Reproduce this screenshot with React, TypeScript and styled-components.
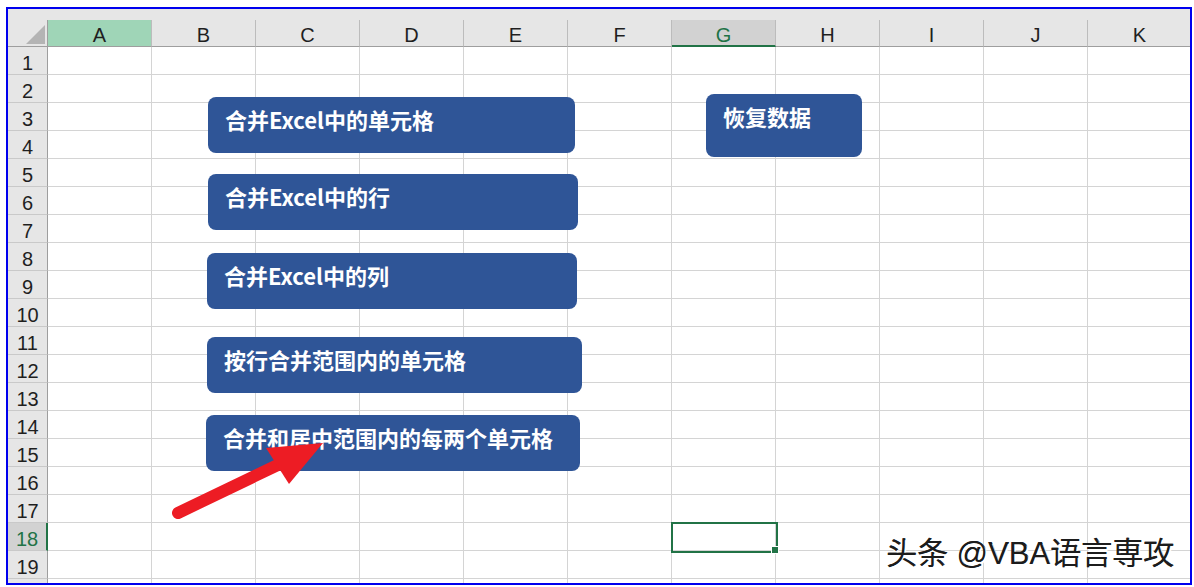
import React from "react";
import styled, { createGlobalStyle, css } from "styled-components";

const GlobalStyle = createGlobalStyle`
  html, body { margin: 0; padding: 0; background: #ffffff; }
  body {
    width: 1194px;
    height: 587px;
    overflow: hidden;
    font-family: "Liberation Sans", Arial, sans-serif;
  }
`;

const COLS = ["A", "B", "C", "D", "E", "F", "G", "H", "I", "J", "K"];
const ROWS = Array.from({ length: 19 }, (_, i) => i + 1);
const SEL_COL = "G";
const SEL_ROW = 18;
const HOVER_COL = "A";

const GREEN = "#217346";

const Page = styled.div`
  padding: 7px 0 0 6px;
`;

const Frame = styled.div`
  position: relative;
  box-sizing: border-box;
  width: 1186px;
  height: 578px;
  border: 2px solid #0000ee;
  background: #e6e6e6;
  overflow: hidden;
`;

const TopBand = styled.div`
  height: 11px;
  background: #e6e6e6;
`;

const Sheet = styled.div`
  display: grid;
  grid-template-columns: 40px repeat(11, 104px);
  grid-template-rows: 27px repeat(20, 28px);
  background: #ffffff;
`;

const Corner = styled.div`
  position: relative;
  box-sizing: border-box;
  background: #e6e6e6;
  border-right: 1px solid #9e9e9e;
  border-bottom: 1px solid #9e9e9e;
  &::after {
    content: "";
    position: absolute;
    right: 2px;
    bottom: 2px;
    width: 19px;
    height: 19px;
    background: #b4b4b4;
    clip-path: polygon(100% 0, 100% 100%, 0 100%);
  }
`;

const headerText = css`
  display: flex;
  align-items: center;
  justify-content: center;
  box-sizing: border-box;
  font-family: "Liberation Sans", Arial, sans-serif;
  font-size: 20px;
  padding-top: 5px;
  color: #1f1f1f;
`;

const ColHeader = styled.div<{ $state: "normal" | "hover" | "selected" }>`
  ${headerText}
  border-right: 1px solid #bcbcbc;
  border-bottom: 1px solid #9e9e9e;
  background: #e6e6e6;
  ${(p) =>
    p.$state === "hover" &&
    css`
      background: #9fd5b7;
    `}
  ${(p) =>
    p.$state === "selected" &&
    css`
      background: #d2d2d2;
      color: ${GREEN};
      border-bottom: 2px solid ${GREEN};
    `}
`;

const RowHeader = styled.div<{ $selected?: boolean }>`
  ${headerText}
  background: #e6e6e6;
  border-right: 1px solid #9e9e9e;
  border-bottom: 1px solid #c9c9c9;
  ${(p) =>
    p.$selected &&
    css`
      background: #d2d2d2;
      color: ${GREEN};
      border-right: 2px solid ${GREEN};
    `}
`;

const Cell = styled.div`
  position: relative;
  box-sizing: border-box;
  background: #ffffff;
  border-right: 1px solid #d4d4d4;
  border-bottom: 1px solid #d4d4d4;
`;

const Selection = styled.div`
  position: absolute;
  left: -1px;
  top: -1px;
  width: 107px;
  height: 31px;
  box-sizing: border-box;
  border: 2px solid ${GREEN};
  z-index: 2;
`;

const FillHandle = styled.div`
  position: absolute;
  left: 98px;
  top: 22px;
  width: 6px;
  height: 6px;
  background: ${GREEN};
  border: 1px solid #ffffff;
`;

const Shape = styled.div<{ $x: number; $y: number; $w: number; $h: number }>`
  position: absolute;
  left: ${(p) => p.$x}px;
  top: ${(p) => p.$y}px;
  width: ${(p) => p.$w}px;
  height: ${(p) => p.$h}px;
  box-sizing: border-box;
  padding: 7px 0 0 17px;
  background: #2f5597;
  border-radius: 8px;
  color: #ffffff;
  font-family: "Noto Sans CJK SC", "Microsoft YaHei", sans-serif;
  font-weight: 700;
  font-size: 22px;
  line-height: 30px;
  white-space: nowrap;
  cursor: pointer;
  z-index: 3;
`;

const Arrow = styled.svg`
  position: absolute;
  left: 152px;
  top: 411px;
  width: 180px;
  height: 110px;
  z-index: 4;
`;

const Watermark = styled.div`
  position: absolute;
  left: 878px;
  top: 527px;
  font-family: "Liberation Sans", "Noto Sans CJK SC", sans-serif;
  font-size: 31px;
  line-height: 36px;
  color: #1c1c1c;
  text-shadow: 1.5px 1.5px 0 #ffffff, 0.4px 0 0 #1c1c1c;
  white-space: nowrap;
  z-index: 5;
`;

const SHAPES = [
  { label: "合并Excel中的单元格", x: 200, y: 88, w: 367, h: 56 },
  { label: "合并Excel中的行", x: 200, y: 165, w: 370, h: 56 },
  { label: "合并Excel中的列", x: 199, y: 244, w: 370, h: 56 },
  { label: "按行合并范围内的单元格", x: 199, y: 328, w: 375, h: 56 },
  { label: "合并和居中范围内的每两个单元格", x: 198, y: 406, w: 374, h: 56 },
  { label: "恢复数据", x: 698, y: 85, w: 156, h: 63 },
];

export default function App() {
  return (
    <>
      <GlobalStyle />
      <Page>
        <Frame>
          <TopBand />
          <Sheet>
            <Corner />
            {COLS.map((c) => (
              <ColHeader
                key={c}
                $state={c === SEL_COL ? "selected" : c === HOVER_COL ? "hover" : "normal"}
              >
                {c}
              </ColHeader>
            ))}
            {ROWS.map((r) => (
              <React.Fragment key={r}>
                <RowHeader $selected={r === SEL_ROW}>{r}</RowHeader>
                {COLS.map((c) => (
                  <Cell key={c}>
                    {r === SEL_ROW && c === SEL_COL && (
                      <Selection>
                        <FillHandle />
                      </Selection>
                    )}
                  </Cell>
                ))}
              </React.Fragment>
            ))}
            <RowHeader />
            {COLS.map((c) => (
              <Cell key={`tail-${c}`} />
            ))}
          </Sheet>

          {SHAPES.map((s) => (
            <Shape key={s.label} $x={s.x} $y={s.y} $w={s.w} $h={s.h}>
              {s.label}
            </Shape>
          ))}

          <Arrow viewBox="160 420 180 110">
            <line
              x1="178"
              y1="513"
              x2="284"
              y2="462"
              stroke="#ed1c24"
              strokeWidth="12"
              strokeLinecap="round"
            />
            <polygon points="323,443 266,448 289,484" fill="#ed1c24" />
          </Arrow>

          <Watermark>头条 @VBA语言専攻</Watermark>
        </Frame>
      </Page>
    </>
  );
}
